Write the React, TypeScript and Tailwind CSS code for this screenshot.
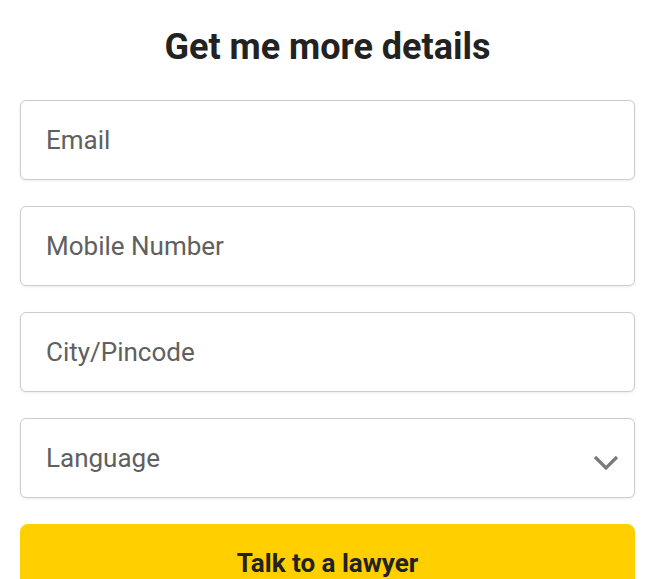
import React from 'react';

const fieldClass =
    "h-[80px] w-full rounded-[6px] border border-[#cccccc] bg-white px-[25px] text-[26px] text-[#222] placeholder:text-[#606060] shadow-[0_1px_3px_rgba(0,0,0,0.08)] outline-none";

const App: React.FC = () => {
    return (
        <div className="min-h-screen bg-white font-['Roboto',sans-serif]">
            <div className="w-[615px] ml-[20px] pt-[27px]">
                <h2 className="text-center text-[36px] leading-[40px] font-bold text-[#222222]">
                    Get me more details
                </h2>

                <form className="mt-[33px] flex flex-col gap-[26px]" onSubmit={(e) => e.preventDefault()}>
                    <input type="email" placeholder="Email" className={fieldClass} />
                    <input type="tel" placeholder="Mobile Number" className={fieldClass} />
                    <input type="text" placeholder="City/Pincode" className={fieldClass} />

                    {/* Language select */}
                    <div className="relative">
                        <select
                            defaultValue=""
                            className={`${fieldClass} appearance-none text-[#606060]`}
                        >
                            <option value="" disabled>Language</option>
                            <option>English</option>
                            <option>Hindi</option>
                        </select>
                        <svg
                            className="pointer-events-none absolute right-[16px] top-[37px]"
                            width="26"
                            height="16"
                            viewBox="0 0 26 16"
                            fill="none"
                        >
                            <path d="M2 2 L13 13 L24 2" stroke="#7a7a7a" strokeWidth="3.2" />
                        </svg>
                    </div>

                    <button
                        type="submit"
                        className="h-[78px] w-full rounded-[8px] bg-[#ffcf00] text-[26px] font-bold text-[#222222]"
                    >
                        Talk to a lawyer
                    </button>
                </form>
            </div>
        </div>
    );
};

export default App;
